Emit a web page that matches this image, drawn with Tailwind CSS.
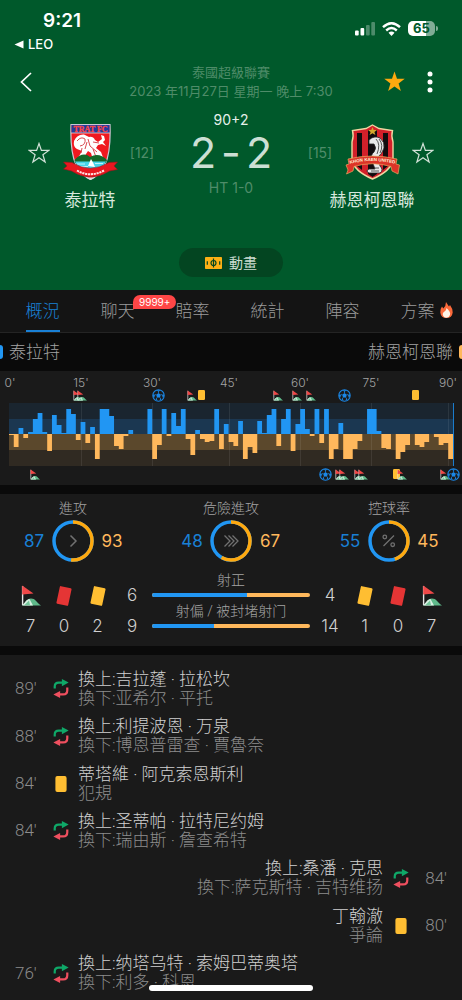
<!DOCTYPE html>
<html lang="zh-Hant">
<head>
<meta charset="utf-8">
<meta name="viewport" content="width=device-width, initial-scale=1">
<title>泰拉特 2-2 赫恩柯恩聯</title>
<script src="https://cdn.jsdelivr.net/npm/@tailwindcss/browser@4"></script>
</head>
<body class="bg-[#0a0a0a] font-['Inter','Noto_Sans_CJK_TC',sans-serif] font-light text-[#d0d0d0]">

<svg class="hidden" aria-hidden="true">
  <symbol id="corner" viewBox="0 0 20 21">
    <path d="M1 20.500 C4 19 5 13.500 10 13.500 C14.500 13.500 15 17 20 20.500Z" fill="#5fb98a"/>
    <path d="M1 20.500 C4 18 5 14.500 8.500 14 L12 20.500Z" fill="#d9f0e2"/>
    <path d="M3.500 20 L8 15.500 L9 20Z" fill="#74c79b"/>
    <path d="M1.600 20 V1" stroke="#e6e6e6" stroke-width="1.400"/>
    <path d="M1.200 0.500 L12.500 8.500 L1.200 9.500Z" fill="#f04848"/>
  </symbol>
  <symbol id="ball" viewBox="0 0 24 24">
    <circle cx="12" cy="12" r="10.500" fill="none" stroke="#1b87e6" stroke-width="2"/>
    <path d="M12 7.500 L16.300 10.600 L14.700 15.600 H9.300 L7.700 10.600Z M8 2.500 L12 5 L16 2.500Z M2 9.500 L5.500 11.500 L4 16 L2 14Z M22 9.500 L18.500 11.500 L20 16 L22 14Z M7 20.500 L8.500 17.500 L10.500 21.500Z M17 20.500 L15.500 17.500 L13.500 21.500Z" fill="#1b87e6"/>
    <path d="M12 7.500 V4 M7.700 10.600 L4.500 10.500 M16.300 10.600 L19.500 10.500 M9.300 15.600 L7.500 19 M14.700 15.600 L16.500 19" stroke="#1b87e6" stroke-width="1.400"/>
  </symbol>
  <symbol id="card" viewBox="0 0 7 10"><rect width="7" height="10" rx="1.200" fill="#ffbe32"/></symbol>
  <symbol id="swap" viewBox="0 0 45 56">
    <path d="M4 28 V22 Q4 10.500 16 10.500 H28" fill="none" stroke="#0fa868" stroke-width="6.500"/>
    <path d="M25 0 L45 10.500 L25 21Z" fill="#0fa868"/>
    <path d="M41 25 V33 Q41 45.500 29 45.500 H17" fill="none" stroke="#ef4f5f" stroke-width="6.500"/>
    <path d="M20 35 L0 45.500 L20 56Z" fill="#ef4f5f"/>
  </symbol>
  <symbol id="star" viewBox="0 0 22 22">
    <path d="M11 1.500 L13.400 8.400 H20.800 L14.900 12.800 L17.100 20 L11 15.700 L4.900 20 L7.100 12.800 L1.200 8.400 H8.600Z"/>
  </symbol>
</svg>

<div class="flex min-h-screen flex-col">

<header class="bg-[#00592b]">
  <!-- status bar -->
  <div class="flex h-14 items-start justify-between pr-6 pl-[14px]">
    <div>
      <div class="mt-[10px] pl-[29px] text-[19px] leading-[22px] font-semibold text-white">9:21</div>
      <a href="#" class="mt-1 flex items-center gap-1 text-[13px] leading-4 font-medium text-white">
        <svg class="h-[9px] w-[10px]" viewBox="0 0 10 9"><path d="M0.500 4.500 L9.500 0.500 V8.500Z" fill="#fff"/></svg>LEO</a>
    </div>
    <div class="mt-[21px] flex items-center gap-[7px]">
      <svg class="h-[15px] w-5" viewBox="0 0 20 15">
        <rect x="0" y="9.500" width="3.700" height="5" rx="1" fill="#fff"/><rect x="5.500" y="7" width="3.700" height="7.500" rx="1" fill="#fff"/>
        <rect x="11" y="4" width="3.700" height="10.500" rx="1" fill="#fff" opacity=".3"/><rect x="16.300" y="1" width="3.700" height="13.500" rx="1" fill="#fff" opacity=".3"/>
      </svg>
      <svg class="h-[14px] w-[19px]" viewBox="0 0 19 14" fill="none" stroke="#fff">
        <path d="M1 5.200 Q9.500 -2.600 18 5.200" stroke-width="2.500"/><path d="M4.200 8.500 Q9.500 3.700 14.800 8.500" stroke-width="2.400"/><path d="M6.500 10.800 Q9.500 8.300 12.500 10.800 L9.500 14Z" fill="#fff" stroke="none"/>
      </svg>
      <div class="flex items-center gap-px">
        <div class="h-[15px] w-[27px] rounded-[5px] bg-linear-to-r from-white from-65% to-white/50 to-65% text-center text-[13px] leading-[15px] font-bold text-[#00592b]">65</div>
        <div class="h-[5px] w-[2px] rounded-r bg-white/50"></div>
      </div>
    </div>
  </div>

  <!-- navigation -->
  <div class="grid h-[51px] grid-cols-[1fr_auto_1fr] items-center">
    <button aria-label="返回" class="pl-5"><svg class="h-5 w-3" viewBox="0 0 12 20"><path d="M11 1 L1.500 10 L11 19" fill="none" stroke="#fff" stroke-width="1.700"/></svg></button>
    <div class="text-center text-[13px] leading-[19px] font-normal text-[#4f8c69]">
      <div>泰國超級聯賽</div>
      <div>2023 年11月27日 星期一 晚上 7:30</div>
    </div>
    <div class="flex items-center justify-end gap-[21px] pr-[29px]">
      <button aria-label="收藏"><svg class="block size-[23px] fill-[#fda90f]"><use href="#star"/></svg></button>
      <button aria-label="更多"><svg class="block h-[22px] w-[6px]" viewBox="0 0 6 22" fill="#fff"><circle cx="3" cy="3" r="2.500"/><circle cx="3" cy="11" r="2.500"/><circle cx="3" cy="19" r="2.500"/></svg></button>
    </div>
  </div>

  <!-- score -->
  <section class="mt-[3px] grid grid-cols-[22px_80px_24px_1fr_24px_80px_22px] items-start px-7 text-[#4f8c69]">
    <button aria-label="關注泰拉特" class="mt-8"><svg class="block size-[22px] fill-none stroke-[#d2e2d8] stroke-[1.200]"><use href="#star"/></svg></button>
    <div class="flex flex-col items-center pt-[14px]">
      <svg class="h-14 w-[55px]" viewBox="0 0 55 56" role="img" aria-label="TRAT FC">
        <path d="M8 0.500 H47 Q48 28 42 41 Q36 52 27.500 55.500 Q19 52 13 41 Q7 28 8 0.500Z" fill="#f01820" stroke="#c9c9d6" stroke-width="1.200"/>
        <path d="M8.500 1 H46.500 V9 H8.500Z" fill="#213c9c"/>
        <text x="27.500" y="7.500" text-anchor="middle" font-family="Liberation Serif" font-weight="bold" font-size="8" fill="#ff4646" stroke="#ff4646" stroke-width=".3">TRAT FC</text>
        <path d="M8 9 H47" stroke="#ddd" stroke-width=".8"/>
        <path d="M11 17 Q14 10 21 10.500 L26 13 Q30 12 32 16 L35 18 L39 15 L38 11 L41 12 L42 16 L40 18 L43 22 L39 20 L35 21 L33 24 L38 28 L41 36 H30 L28 29 L25 27 L21 33 L15 34 L19 27 L14 25 Q10 23 11 17Z" fill="#fff"/>
        <path d="M14 17 Q18 12 22 15 Q23 21 17 22 M25 15 L27 22 L34 28 M24 18 L22 25 M19 24 L18 29 M30 18 L36 19 M30 25 L33 33" fill="none" stroke="#d94a50" stroke-width="1"/>
        <path d="M11.500 36 Q20 27 27 33 Q36 28 44 36 L43 39 H12Z" fill="#16682a"/>
        <path d="M12 37.500 H43 Q41 42 38 45 H17 Q14 42 12 37.500Z" fill="#46d5e9"/>
        <path d="M14 40 H22 M32 39.500 H40 M17 42.500 H25" stroke="#d9faff" stroke-width=".8"/>
        <path d="M28 35 L25 42 L32 43 Q30 38 28 35Z" fill="#fff"/>
        <path d="M0.500 38 L9 38.500 Q27 50 46 38.500 L54.500 38 L51 42 L54.500 45.500 L46.500 47 Q27.500 59 8.500 47 L0.500 45 L4 42Z" fill="#e81820" stroke="#95151d" stroke-width=".6"/>
        <path d="M14 46.500 Q27 54 41 46.500" fill="none" stroke="#ffe4e4" stroke-width="2" stroke-dasharray="2.200 .7"/>
        <path d="M23 53.500 L27.500 56 L32 53.500Z" fill="#ddd"/>
      </svg>
      <div class="mt-2 text-[17px] leading-6 font-normal whitespace-nowrap text-[#d8e8de]">泰拉特</div>
    </div>
    <div class="mt-[33px] flex justify-center text-[14px] leading-5 font-normal whitespace-nowrap">[12]</div>
    <div class="flex flex-col items-center">
      <div class="text-[14px] leading-5 font-normal text-[#e6f0ea]">90+2</div>
      <div class="flex gap-[5px] text-[43px] leading-[44px] font-normal text-[#ccdfd4]"><span>2</span><span>-</span><span>2</span></div>
      <div class="mt-1 text-[14px] leading-5 font-normal">HT 1-0</div>
    </div>
    <div class="mt-[33px] flex justify-center text-[14px] leading-5 font-normal whitespace-nowrap">[15]</div>
    <div class="flex flex-col items-center pt-[14px]">
      <svg class="h-14 w-[55px]" viewBox="0 0 55 56" role="img" aria-label="KHON KAEN UNITED">
        <path d="M27.500 1 L34 4.500 L47.500 6.500 Q46 12 48 18 V36 Q46 47 27.500 55 Q9 47 7 36 V18 Q9 12 7.500 6.500 L21 4.500Z" fill="#d3202a" stroke="#efd7a2" stroke-width="1.400"/>
        <path d="M12 9 H17 V46 L12 42Z M38 9 H43 V42 L38 46Z M23 6 H32 V50 L27.500 53 L23 50Z" fill="#120c0e"/>
        <path d="M27.500 3 L28.700 6 H32 L29.400 8 L30.400 11 L27.500 9.200 L24.600 11 L25.600 8 L23 6 H26.300Z" fill="#d4a92c"/>
        <path d="M24 16 Q29 11 35 14 Q40 18 39 24 Q37 30 33 33 L35 42 Q39 46 35 49 H24 Q20 47 24 45 H30 L27 37 Q25 31 29 28 Q32 24 29 20 L24 20Z" fill="#e9e9e9" stroke="#222" stroke-width=".8"/>
        <path d="M31 15 Q36 20 32 30 M34 15 Q39 21 35 29 M28 33 H33 M29 44 H34 M26 47 H34" fill="none" stroke="#444" stroke-width=".9"/>
        <path d="M1 41 L4 40 L3 35 Q27 29 52 35 L51 40 L54.500 41 L53 50 L47 47 L46 42.500 Q27 37 9 42.500 L8 47 L1.500 50 L3 46Z" fill="#dc3428" stroke="#eba85e" stroke-width=".7"/>
        <path id="ribbon" d="M2.500 40.500 Q27.500 33.500 52.500 40.500" fill="none"/>
        <text font-family="Liberation Sans" font-weight="bold" font-size="4.500" fill="#fff3da"><textPath href="#ribbon" startOffset="50%" text-anchor="middle">KHON KAEN UNITED</textPath></text>
      </svg>
      <div class="mt-2 text-[17px] leading-6 font-normal whitespace-nowrap text-[#d8e8de]">赫恩柯恩聯</div>
    </div>
    <button aria-label="關注赫恩柯恩聯" class="mt-8"><svg class="block size-[22px] fill-none stroke-[#d2e2d8] stroke-[1.200]"><use href="#star"/></svg></button>
  </section>

  <div class="flex justify-center pt-9 pb-[13px]">
    <button class="flex h-[29px] w-[104px] items-center justify-center gap-[7px] rounded-full bg-[#034521] text-[14px] font-normal text-[#ccdcd2]">
      <svg class="h-3 w-[17px]" viewBox="0 0 17 12"><rect width="17" height="12" rx=".8" fill="#fdb015"/><g fill="none" stroke="#034521" stroke-width="1.200"><circle cx="8.500" cy="6" r="2.500"/><path d="M8.500 1.500 V10.500 M2.300 4.200 V7.800 M14.700 4.200 V7.800"/></g></svg>動畫</button>
  </div>
</header>

<nav class="grid h-[43px] grid-cols-6 border-b border-[#242424] bg-[#141414] pr-[7px] pl-[5px] text-[17px] leading-[42px] text-[#9b9b9b]">
  <a href="#" aria-current="page" class="flex justify-center text-[#1980d5]"><span class="h-[42px] border-b-2 border-[#1980d5]">概況</span></a>
  <a href="#" class="relative text-center">聊天<span class="absolute top-[5px] left-[53px] z-10 h-[14px] rounded-full rounded-bl-none bg-[#ff4646] px-[6px] text-[10px] leading-[14px] font-normal text-white">9999+</span></a>
  <a href="#" class="text-center">賠率</a>
  <a href="#" class="text-center">統計</a>
  <a href="#" class="text-center">陣容</a>
  <a href="#" class="relative text-center">方案<svg class="absolute top-3 right-[2px] h-4 w-[13px]" viewBox="0 0 13 16"><path d="M6 0 Q7.500 2.500 9 4.500 L10 3 Q13 7 12.700 10.500 Q12 16 6.500 16 Q1 16 0.300 10.500 Q0 7 2 4.500 L3.300 6.500 Q6 4 6 0Z" fill="#fb6a3b"/><path d="M6.500 6 Q11 10 10 13 Q9 15.800 6.500 15.800 Q3 15.500 2.700 12 Q3 10 4.500 9.500 Q6.500 8.500 6.500 6Z" fill="#fff4e6"/></svg></a>
</nav>

<main class="flex flex-1 flex-col gap-[9px]">
  <section>
    <div class="flex h-[38px] items-center justify-between text-[17px] leading-6 text-[#a3a3a3]">
      <div class="flex items-center gap-[6px]"><span class="h-[14px] w-[3px] rounded-r-[3px] bg-[#2196f3]"></span>泰拉特</div>
      <div class="flex items-center gap-[6px]">赫恩柯恩聯<span class="h-[14px] w-[3px] rounded-l-[3px] bg-[#ffb85c]"></span></div>
    </div>
    <div class="bg-[#1a1a1a]">
      <svg class="block w-full" viewBox="0 0 462 114" role="img" aria-label="比賽走勢">
        <g class="fill-[#a3a3a3] text-[12px]" text-anchor="middle">
          <text x="10" y="16">0'</text><text x="81" y="16">15'</text><text x="152" y="16">30'</text><text x="229" y="16">45'</text><text x="300" y="16">60'</text><text x="371" y="16">75'</text><text x="448" y="16">90'</text>
        </g>
        <rect x="9" y="32" width="444" height="16" fill="#1a252f"/><rect x="9" y="48" width="444" height="15" fill="#1b3751"/>
        <rect x="9" y="63" width="444" height="16" fill="#5b482c"/><rect x="9" y="79" width="444" height="16" fill="#302a22"/>
        <path d="M81.500 32V95 M152.500 32V95 M229.500 32V95 M300.500 32V95 M371.500 32V95 M448.500 32V95" stroke="#fff" stroke-opacity=".08"/>
        <g id="bars"></g>
        <path d="M453.500 32V95" stroke="#1b7ccc"/>
        <use href="#corner" x="73" y="19" width="10" height="11"/><use href="#corner" x="77" y="19" width="10" height="11"/>
        <use href="#ball" x="152" y="18" width="13" height="13"/>
        <use href="#corner" x="187" y="19" width="10" height="11"/><use href="#card" x="198" y="19" width="7" height="10"/>
        <use href="#corner" x="273" y="19" width="10" height="11"/><use href="#corner" x="292" y="19" width="10" height="11"/><use href="#corner" x="306" y="19" width="10" height="11"/>
        <use href="#ball" x="338" y="18" width="13" height="13"/><use href="#card" x="412" y="19" width="7" height="10"/>
        <use href="#corner" x="30" y="98" width="10" height="11"/>
        <use href="#ball" x="319" y="97" width="13" height="13"/>
        <use href="#corner" x="335" y="98" width="10" height="11"/><use href="#corner" x="339" y="98" width="10" height="11"/>
        <use href="#corner" x="354" y="98" width="10" height="11"/><use href="#corner" x="358" y="98" width="10" height="11"/>
        <use href="#card" x="393" y="98" width="7" height="10"/><use href="#corner" x="397" y="98" width="10" height="11"/>
        <use href="#corner" x="440" y="98" width="10" height="11"/><use href="#ball" x="447" y="97" width="13" height="13"/>
      </svg>
    </div>
  </section>

  <section class="bg-[#1a1a1a] pt-1 pb-1 text-[#a3a3a3]">
    <div class="flex justify-between px-6 text-[14px] leading-5">
      <div class="flex flex-col items-center">
        <div>進攻</div>
        <div class="mt-[2px] flex items-center gap-2 text-[17px] font-normal">
          <span class="flex w-5 justify-center text-[#1980d5]">87</span>
          <svg class="size-[42px]" viewBox="0 0 42 42" fill="none"><circle cx="21" cy="21" r="19" stroke="#2196f3" stroke-width="3.500"/><circle cx="21" cy="21" r="19" stroke="#ffa90f" stroke-width="3.500" pathLength="100" stroke-dasharray="51.700 100" transform="rotate(-90 21 21)"/><path d="M18.500 15.500 L24 21 L18.500 26.500" stroke="#717171" stroke-width="1.500"/></svg>
          <span class="flex w-5 justify-center text-[#ffb85c]">93</span>
        </div>
      </div>
      <div class="flex flex-col items-center">
        <div>危險進攻</div>
        <div class="mt-[2px] flex items-center gap-2 text-[17px] font-normal">
          <span class="flex w-5 justify-center text-[#1980d5]">48</span>
          <svg class="size-[42px]" viewBox="0 0 42 42" fill="none"><circle cx="21" cy="21" r="19" stroke="#2196f3" stroke-width="3.500"/><circle cx="21" cy="21" r="19" stroke="#ffa90f" stroke-width="3.500" pathLength="100" stroke-dasharray="58.300 100" transform="rotate(-90 21 21)"/><path d="M14.500 15.500 L20 21 L14.500 26.500 M18.500 15.500 L24 21 L18.500 26.500 M22.500 15.500 L28 21 L22.500 26.500" stroke="#717171" stroke-width="1.300"/></svg>
          <span class="flex w-5 justify-center text-[#ffb85c]">67</span>
        </div>
      </div>
      <div class="flex flex-col items-center">
        <div>控球率</div>
        <div class="mt-[2px] flex items-center gap-2 text-[17px] font-normal">
          <span class="flex w-5 justify-center text-[#1980d5]">55</span>
          <svg class="size-[42px]" viewBox="0 0 42 42" fill="none"><circle cx="21" cy="21" r="19" stroke="#2196f3" stroke-width="3.500"/><circle cx="21" cy="21" r="19" stroke="#ffa90f" stroke-width="3.500" pathLength="100" stroke-dasharray="45 100" transform="rotate(-90 21 21)"/><g stroke="#717171" stroke-width="1.300"><path d="M26 15.500 L15.500 26"/><circle cx="16.800" cy="17" r="1.800"/><circle cx="24.700" cy="24.700" r="1.800"/></g></svg>
          <span class="flex w-5 justify-center text-[#ffb85c]">45</span>
        </div>
      </div>
    </div>
    <div class="mt-[10px] flex px-[14px]">
      <div class="mt-2 grid grid-cols-[33px_34px_33px_36px] grid-rows-[31px_31px] place-items-center text-[17px] text-[#d0d0d0]">
        <svg class="h-[21px] w-5" role="img" aria-label="角球"><use href="#corner"/></svg>
        <span class="h-[18px] w-3 rotate-12 rounded-[1px] bg-[#e53535]"></span>
        <span class="h-[18px] w-3 rotate-12 rounded-[1px] bg-[#ffbe32]"></span>
        <span>6</span><span>7</span><span>0</span><span>2</span><span>9</span>
      </div>
      <div class="flex-1 px-[2px] text-center text-[14px] leading-4">
        <div class="h-[21px]">射正</div>
        <div class="mb-[6px] flex h-1 overflow-hidden rounded-full bg-[#ffb85c]"><div class="bg-[#2196f3]" style="width:60%"></div></div>
        <div class="h-[21px] font-['Roboto','Noto_Sans_CJK_TC',sans-serif] whitespace-nowrap">射偏 / 被封堵射门</div>
        <div class="flex h-1 overflow-hidden rounded-full bg-[#ffb85c]"><div class="bg-[#2196f3]" style="width:39%"></div></div>
      </div>
      <div class="mt-2 grid grid-cols-[36px_33px_34px_33px] grid-rows-[31px_31px] place-items-center text-[17px] text-[#d0d0d0]">
        <span>4</span>
        <span class="h-[18px] w-3 rotate-12 rounded-[1px] bg-[#ffbe32]"></span>
        <span class="h-[18px] w-3 rotate-12 rounded-[1px] bg-[#e53535]"></span>
        <svg class="h-[21px] w-5" role="img" aria-label="角球"><use href="#corner"/></svg>
        <span>14</span><span>1</span><span>0</span><span>7</span>
      </div>
    </div>
  </section>

  <ol class="grid flex-1 auto-rows-fr bg-[#1a1a1a] pt-[10px] pb-[3px] font-['Roboto','Noto_Sans_CJK_TC',sans-serif] text-[17px] leading-[19px] text-[#8c8c8c]">
    <li class="flex items-center"><time class="w-[53px] pl-[15px]">89'</time><svg class="mr-[9px] h-[19px] w-4"><use href="#swap"/></svg><div><p class="text-[#d0d0d0]">換上:吉拉蓬 · 拉松坎</p><p>換下:亚希尔 · 平托</p></div></li>
    <li class="flex items-center"><time class="w-[53px] pl-[15px]">88'</time><svg class="mr-[9px] h-[19px] w-4"><use href="#swap"/></svg><div><p class="text-[#d0d0d0]">換上:利提波恩 · 万泉</p><p>換下:博恩普雷查 · 賈魯奈</p></div></li>
    <li class="flex items-center"><time class="w-[53px] pl-[15px]">84'</time><svg class="mr-[9px] h-4 w-4"><use href="#card"/></svg><div><p class="text-[#d0d0d0]">蒂塔維 · 阿克索恩斯利</p><p>犯規</p></div></li>
    <li class="flex items-center"><time class="w-[53px] pl-[15px]">84'</time><svg class="mr-[9px] h-[19px] w-4"><use href="#swap"/></svg><div><p class="text-[#d0d0d0]">換上:圣蒂帕 · 拉特尼约姆</p><p>換下:瑞由斯 · 詹查希特</p></div></li>
    <li class="flex flex-row-reverse items-center text-right"><time class="w-[53px] pr-[15px]">84'</time><svg class="ml-[10px] h-[19px] w-4"><use href="#swap"/></svg><div><p class="text-[#d0d0d0]">換上:桑潘 · 克思</p><p>換下:萨克斯特 · 吉特维扬</p></div></li>
    <li class="flex flex-row-reverse items-center text-right"><time class="w-[53px] pr-[15px]">80'</time><svg class="ml-[10px] h-4 w-4"><use href="#card"/></svg><div><p class="text-[#d0d0d0]">丁翰澈</p><p>爭論</p></div></li>
    <li class="flex items-center"><time class="w-[53px] pl-[15px]">76'</time><svg class="mr-[9px] h-[19px] w-4"><use href="#swap"/></svg><div><p class="text-[#d0d0d0]">換上:纳塔乌特 · 索姆巴蒂奥塔</p><p>換下:利多 · 科恩</p></div></li>
  </ol>
</main>
</div>

<div class="fixed bottom-[9px] left-1/2 h-[6px] w-[164px] -translate-x-1/2 rounded-full bg-white"></div>

<script>
// Attack pressure per minute: positive = home, negative = away.
const pressure = [-1,-13,6,-4,2,15,21,2,-17,19,9,1,25,20,-6,12,-9,7,-25,25,25,18,-12,-15,-2,4,0,0,0,25,-25,-11,25,-2,21,8,25,-5,-21,4,-5,-8,-7,25,-15,10,-8,-12,13,-25,-13,-19,13,1,19,25,-12,15,25,-17,10,25,5,-2,25,-9,25,-25,-15,11,-25,-25,-15,-7,0,25,25,3,-14,-15,0,-25,-18,-11,0,-11,-13,-8,0,-3,-11,-9,-25];
const step = 444 / pressure.length;
let up = "", down = "";
pressure.forEach((v, i) => {
  const d = `M${9 + i * step} 63V${63 - v}H${9 + (i + 1) * step}V63Z`;
  if (v > 0) up += d; else if (v < 0) down += d;
});
document.getElementById("bars").innerHTML = `<path d="${up}" fill="#2196f3"/><path d="${down}" fill="#ffb85c"/>`;
</script>
</body>
</html>
